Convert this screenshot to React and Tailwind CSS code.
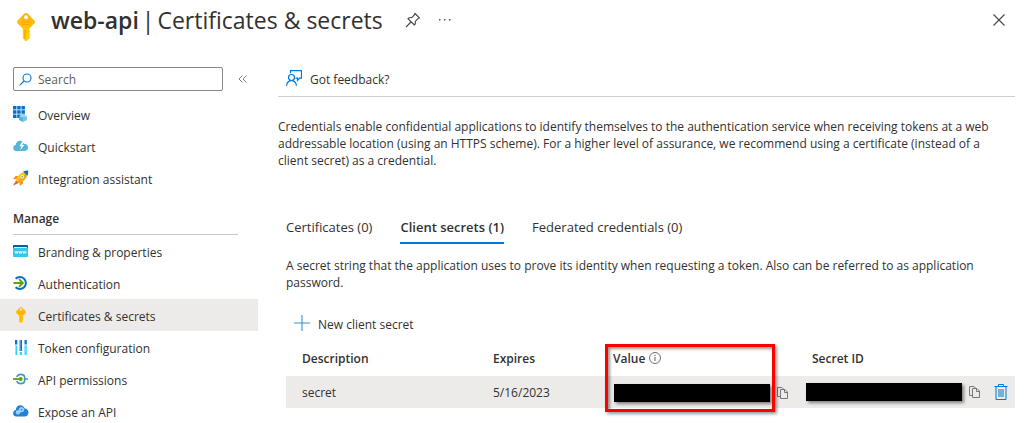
import React from 'react';

function KeyIcon({ className }) {
  return (
    <svg viewBox="0 0 18 28" className={className} aria-hidden="true">
      <defs>
        <linearGradient id="keyFill" x1="0" y1="0" x2="0" y2="1">
          <stop offset="0" stopColor="#feb00f" />
          <stop offset="1" stopColor="#ffd400" />
        </linearGradient>
      </defs>
      <path
        fillRule="evenodd"
        d="M7.2.8Q9-.6 10.8.8l6.300 6.400q1.600 1.800 0 3.600l-4.800 5v1.400l1.200 1.200-1.400 1.600 1.400 1.500-1.400 1.600 1.200 1.400-3 3q-1.300 1-2.600 0L5.800 25V15.800L.9 10.800q-1.600-1.800 0-3.600zM9 2.200a2 2 0 1 0 0 4 2 2 0 0 0 0-4z"
        fill="url(#keyFill)"
      />
      <path d="M5 9h8M5 11.500h8" stroke="#ff9300" strokeWidth="1.200" strokeLinecap="round" opacity=".6" />
      <path d="M8 17v8.500" stroke="#ff9300" strokeWidth="1.200" opacity=".8" />
    </svg>
  );
}

function OverviewIcon() {
  return (
    <svg viewBox="0 0 16 16" className="size-4" aria-hidden="true">
      <path
        fill="#0a6fc4"
        d="M0 0h3.500v3.500H0zM4.200 0h3.500v3.500H4.200zM8.400 0h3.500v3.500H8.400zM0 4.200h3.500v3.500H0zM4.200 4.200h3.500v3.500H4.200zM8.400 4.200h3.500v3.500H8.400zM0 8.400h3.500v3.500H0zM4.200 8.400h3.500v3.500H4.200zM8.400 8.400h3.500v3.500H8.400z"
      />
      <path fill="#9bdcf0" d="M6 10.200l4-1.900 4 1.900-4 1.900z" />
      <path fill="#50b3d8" d="M6 10.200l4 1.900V16l-4-2z" />
      <path fill="#74cbe6" d="M14 10.200l-4 1.900V16l4-2z" />
    </svg>
  );
}

function QuickstartIcon() {
  return (
    <svg viewBox="0 0 16 16" className="size-4" aria-hidden="true">
      <path fill="#59b4d9" d="M3.500 13A3.300 3.300 0 0 1 .2 9.900C.2 8.300 1.300 7.200 2.700 7c.2-2.500 2-4.200 4.300-4.200 2 0 3.500 1.200 4.100 3 2.300 0 4 1.500 4 3.700 0 2.100-1.500 3.500-3.600 3.500z" />
      <path fill="#fff" d="M9.700 3L6.500 8.200h2l-1.400 4 4.300-5.300H9.300L11.700 3z" />
    </svg>
  );
}

function RocketIcon() {
  return (
    <svg viewBox="0 0 16 16" className="size-4" aria-hidden="true">
      <path fill="#f78d1e" d="M5.200 6H2.600L0 9.100l3.600.2zM10 10.800v2.600L6.700 16l-.2-3.600z" />
      <path fill="#f15a24" d="M3.200 10.200L0 15.700l5.800-2.900z" />
      <path fill="#ffc61a" d="M14.800.9C10.500 1 7 3 4.700 6.400L2.700 10l3.400 3.300 3.600-2.100C13.200 8.700 15 5.200 14.800.9z" />
      <path fill="#f78d1e" d="M14.800.9L4.400 11.700l1.700 1.600 3.600-2.100C13.200 8.700 15 5.200 14.800.9z" opacity=".6" />
      <path fill="#0a6fc4" d="M15.200.5c.1 2.200-.2 3.800-.9 5.200L10.200 1.500c1.400-.7 3-.9 5-1z" />
      <circle cx="9.300" cy="6.700" r="1.700" fill="#fff" />
      <circle cx="9.300" cy="6.700" r="1" fill="#50b3d8" />
    </svg>
  );
}

function BrandingIcon() {
  return (
    <svg viewBox="0 0 16 16" className="size-4" aria-hidden="true">
      <path fill="#32c8ea" d="M0 5h15v8.200a.8.800 0 0 1-.8.800H.8a.8.800 0 0 1-.8-.8z" />
      <path fill="#0a5ba8" d="M.8 2h13.400a.8.800 0 0 1 .8.800V5H0V2.800A.8.800 0 0 1 .8 2z" />
      <path stroke="#d8f5fc" strokeWidth="1" d="M1 4.500h13" />
      <path
        fill="none"
        stroke="#fff"
        strokeWidth=".8"
        d="M2 8l.8 2.500.8-2 .8 2L5.200 8M6 8l.8 2.500.8-2 .8 2L9.200 8M10 8l.8 2.500.8-2 .8 2 .8-2.500"
      />
    </svg>
  );
}

function AuthenticationIcon() {
  return (
    <svg viewBox="0 0 16 16" className="size-4" aria-hidden="true">
      <path fill="none" stroke="#0a6fc4" strokeWidth="2" d="M2.600 3.800a6 6 0 1 1 0 8.400" />
      <path fill="none" stroke="#5ea500" strokeWidth="1.900" d="M.5 8h9M6 4.200L9.800 8 6 11.800" />
    </svg>
  );
}

function TokenIcon() {
  return (
    <svg viewBox="0 0 16 16" className="size-4" aria-hidden="true">
      <path fill="#32d4f5" d="M2 6.500h2.300V16H2zM6.700 13H9v3H6.700zM11.500 6.500h2.300V16h-2.300z" />
      <path fill="#0b74d1" d="M2 1h2.300v4.500H2zM6.700 1H9v11H6.700zM11.500 1h2.300v4.500h-2.300z" />
      <path fill="#8be9fb" d="M2 6.500h1V16H2zM11.500 6.500h1V16h-1z" />
      <path fill="#5ea0ef" d="M6.700 1h1v11h-1z" />
    </svg>
  );
}

function PermissionsIcon() {
  return (
    <svg viewBox="0 0 16 16" className="size-4" aria-hidden="true">
      <path fill="none" stroke="#3f9bc4" strokeWidth="1.600" d="M3.800 6a4.200 3.800 0 0 1 8 0M3.800 10a4.200 3.800 0 0 0 8 0M11.600 5.800V10.200M11.800 8H15" />
      <path stroke="#5ea500" strokeWidth="1.800" d="M0 8h7" />
      <circle cx="7.700" cy="8" r="2" fill="#5ea500" />
    </svg>
  );
}

function ExposeIcon() {
  return (
    <svg viewBox="0 0 16 16" className="size-4" aria-hidden="true">
      <path fill="#2380d9" d="M3.600 13.500A3.400 3.400 0 0 1 .1 10.200C.1 8.500 1.300 7.200 2.800 7c.2-2.800 2-4.800 4.600-4.800 2.100 0 3.700 1.300 4.300 3.300 2.200.1 3.800 1.700 3.800 3.900 0 2.300-1.600 4.100-3.800 4.100z" />
      <g fill="#8fc7f5" stroke="#e1f1fd" strokeWidth=".6">
        <circle cx="5" cy="9.300" r="1.800" />
        <circle cx="8.500" cy="6.700" r="2.200" />
      </g>
      <circle cx="8.500" cy="6.700" r=".7" fill="#2380d9" />
    </svg>
  );
}

function CopyIcon() {
  return (
    <svg viewBox="0 0 12 14" className="h-[14px] w-3" fill="none" stroke="#777" aria-hidden="true">
      <path d="M3.500 10.500h-3V1.500H5l2 2" />
      <path d="M3.500 3.500h4.500l2.500 2.500v6.500h-7z" />
      <path d="M7.500 3.500v3h3" />
    </svg>
  );
}

function TrashIcon() {
  return (
    <svg viewBox="0 0 14 16" className="h-4 w-[14px]" fill="none" aria-hidden="true">
      <path fill="#6fb1e2" d="M4 5h6v8H4z" />
      <path stroke="#0078d4" d="M.5 2.500h13M4.500 2.500v-2h5v2M2 3v12.500h10V3" />
    </svg>
  );
}

function PinIcon() {
  return (
    <svg viewBox="0 0 16 16" className="size-4" fill="none" stroke="#444" strokeWidth="1.100" aria-hidden="true">
      <path d="M10 1.500l4.500 4.500-1.500.6-2.700 2.700c.4 1.500 0 2.700-1 3.700L3 6.700c1-1 2.200-1.400 3.700-1l2.700-2.700z" />
      <path d="M6 10L1 15" />
    </svg>
  );
}

function FeedbackIcon() {
  return (
    <svg viewBox="0 0 16 16" className="size-4" fill="none" stroke="#0078d4" strokeWidth="1.200" aria-hidden="true">
      <circle cx="5.500" cy="7.500" r="3" />
      <path d="M.6 15.800c.2-3 2-5.100 4.900-5.100s4.700 2.100 4.900 5.100" />
      <path d="M4.500 3.200V.7h11v7.500h-2l-2 2.200V8.200h-2" />
    </svg>
  );
}

const generalItems = [
  { label: 'Overview', icon: <OverviewIcon /> },
  { label: 'Quickstart', icon: <QuickstartIcon /> },
  { label: 'Integration assistant', icon: <RocketIcon /> },
];

const manageItems = [
  { label: 'Branding & properties', icon: <BrandingIcon /> },
  { label: 'Authentication', icon: <AuthenticationIcon /> },
  { label: 'Certificates & secrets', icon: <KeyIcon className="h-4 w-4" />, active: true },
  { label: 'Token configuration', icon: <TokenIcon /> },
  { label: 'API permissions', icon: <PermissionsIcon /> },
  { label: 'Expose an API', icon: <ExposeIcon /> },
];

function NavList({ items }) {
  return (
    <ul>
      {items.map((item) => (
        <li key={item.label}>
          <a
            href="#"
            aria-current={item.active ? 'page' : undefined}
            className={`flex h-8 items-center gap-[9px] pl-[13px] ${item.active ? 'bg-[#edebe9]' : ''}`}
          >
            {item.icon}
            <span className="pt-0.5">{item.label}</span>
          </a>
        </li>
      ))}
    </ul>
  );
}

function Redacted() {
  return <span className="h-[18px] w-[156px] bg-black shadow-[2px_2px_3px_rgba(0,0,0,0.45)]" />;
}

export default function App() {
  return (
    <div className="overflow-hidden bg-white font-['Open_Sans','Noto_Sans',sans-serif] text-[12px] leading-[17px] text-[#323130]">
      <header className="flex h-10 items-center pr-[22px] pl-[17px]">
        <KeyIcon className="mt-[14px] h-7 w-[18px]" />
        <h1 className="ml-4 flex gap-[3px] text-[23px] leading-8">
          <span className="font-semibold">web-api</span>
          <span>|</span>
          <span>Certificates &amp; secrets</span>
        </h1>
        <button type="button" aria-label="Pin" className="ml-[22px]">
          <PinIcon />
        </button>
        <button type="button" aria-label="More actions" className="ml-[18px]">
          <svg viewBox="0 0 12 4" className="h-1 w-3" fill="#555" aria-hidden="true">
            <path d="M0 1h1.500v1.500H0zM5 1h1.500v1.500H5zM10 1h1.500v1.500H10z" />
          </svg>
        </button>
        <button type="button" aria-label="Close" className="ml-auto">
          <svg viewBox="0 0 12 12" className="size-3" stroke="#444" strokeWidth="1.100" aria-hidden="true">
            <path d="M.5.5l11 11M11.500.5l-11 11" />
          </svg>
        </button>
      </header>

      <div className="flex">
        <aside className="w-[258px] shrink-0 pt-[27px]">
          <div className="flex items-center gap-[15px] pb-[7px] pl-[13px]">
            <label className="flex h-6 w-[210px] items-center gap-[6px] rounded-xs border border-[#8a8886] pl-[5px]">
              <svg viewBox="0 0 13 13" className="size-[13px]" fill="none" stroke="#0078d4" strokeWidth="1.100" aria-hidden="true">
                <circle cx="8" cy="5" r="4" />
                <path d="M5 8L.6 12.400" />
              </svg>
              <input
                type="text"
                aria-label="Search"
                placeholder="Search"
                className="w-40 bg-transparent outline-none placeholder:text-[#605e5c]"
              />
            </label>
            <button type="button" aria-label="Collapse menu">
              <svg viewBox="0 0 9 8" className="h-2 w-[9px]" fill="none" stroke="#605e5c" strokeWidth=".8" aria-hidden="true">
                <path d="M4.500.5L1 4l3.500 3.500M8.500.5L5 4l3.500 3.500" />
              </svg>
            </button>
          </div>
          <nav aria-label="Application">
            <NavList items={generalItems} />
            <h2 className="mt-3.5 mr-5 ml-[13px] border-b border-[#c8c6c4] pt-0.5 pb-[7px] font-semibold">Manage</h2>
            <NavList items={manageItems} />
          </nav>
        </aside>

        <main className="min-w-0 flex-1 pt-[26px] pr-3 pl-5">
          <div className="border-b border-[#d2d0ce] pb-[6px] pl-2">
            <button type="button" className="flex h-6 items-center gap-2">
              <FeedbackIcon />
              <span className="pt-0.5">Got feedback?</span>
            </button>
          </div>
          <p className="mt-[21px] pr-3">
            Credentials enable confidential applications to identify themselves to the authentication service when receiving tokens at a web addressable location (using an HTTPS scheme). For a higher level of assurance, we recommend using a certificate (instead of a client secret) as a credential.
          </p>

          <section className="pt-[50px] pl-2">
            <div role="tablist" className="flex gap-7 text-[13px]">
              <button type="button" role="tab" aria-selected="false" className="border-b-2 border-transparent pb-[6px]">
                Certificates (0)
              </button>
              <button type="button" role="tab" aria-selected="true" className="border-b-2 border-[#0078d4] pb-[6px] font-semibold">
                Client secrets (1)
              </button>
              <button type="button" role="tab" aria-selected="false" className="border-b-2 border-transparent pb-[6px]">
                Federated credentials (0)
              </button>
            </div>
            <p className="mt-[13px]">
              A secret string that the application uses to prove its identity when requesting a token. Also can be referred to as application password.
            </p>
            <button type="button" className="mt-5 ml-2 flex h-6 items-center gap-2">
              <svg viewBox="0 0 16 16" className="size-4" stroke="#0078d4" strokeWidth="1.100" opacity=".8" aria-hidden="true">
                <path d="M8 0v16M0 8h16" />
              </svg>
              <span className="pt-0.5">New client secret</span>
            </button>

            <table className="mt-[5px] w-full table-fixed text-left">
              <thead>
                <tr className="h-9 [&>th]:font-semibold">
                  <th className="w-[207px] pl-4">Description</th>
                  <th className="w-[120px]">Expires</th>
                  <th className="relative w-[193px]">
                    <span className="flex items-center gap-1">
                      Value
                      <svg viewBox="0 0 12 12" className="size-3" fill="none" stroke="#605e5c" aria-hidden="true">
                        <circle cx="6" cy="6" r="5.500" strokeWidth=".9" />
                        <path d="M6 5v4M6 2.800v1.200" />
                      </svg>
                    </span>
                    <span className="pointer-events-none absolute top-1 -left-2 h-[68px] w-[170px] border-3 border-[#ff0000] shadow-[2px_2px_3px_rgba(0,0,0,0.4),inset_2px_2px_3px_rgba(0,0,0,0.4)]" />
                  </th>
                  <th className="pl-1.5">Secret ID</th>
                </tr>
              </thead>
              <tbody>
                <tr className="h-8 bg-[#edebe9]">
                  <td className="pl-4">secret</td>
                  <td>5/16/2023</td>
                  <td>
                    <div className="flex items-center gap-[7px] pt-0.5 pl-px">
                      <Redacted />
                      <button type="button" aria-label="Copy value">
                        <CopyIcon />
                      </button>
                    </div>
                  </td>
                  <td>
                    <div className="flex items-center gap-[7px]">
                      <Redacted />
                      <button type="button" aria-label="Copy secret ID">
                        <CopyIcon />
                      </button>
                      <button type="button" aria-label="Delete secret" className="mr-[7px] ml-auto">
                        <TrashIcon />
                      </button>
                    </div>
                  </td>
                </tr>
              </tbody>
            </table>
          </section>
        </main>
      </div>
    </div>
  );
}
